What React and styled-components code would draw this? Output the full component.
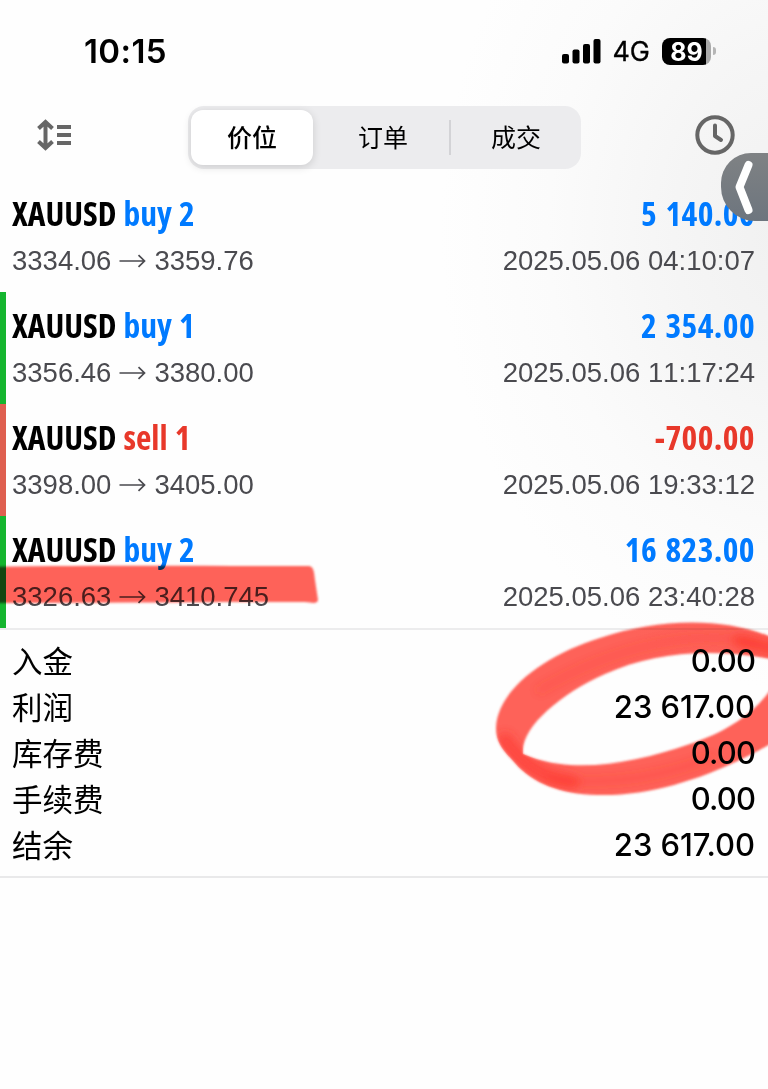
import React from "react";
import styled, { createGlobalStyle } from "styled-components";

const GlobalStyle = createGlobalStyle`
  * {
    box-sizing: border-box;
  }
  body {
    margin: 0;
    background: #fefefe;
  }
`;

const blue = "#007aff";
const red = "#e8382a";

const Screen = styled.div`
  position: relative;
  width: 768px;
  height: 1089px;
  overflow: hidden;
  color: #000;
  font-family: "Liberation Sans", "Noto Sans CJK SC", sans-serif;
  background: radial-gradient(ellipse 360px 460px at 800px 230px, #f0f0f0 0%, #f5f5f5 35%, #fbfbfb 70%, #fefefe 100%);
`;

const StatusBar = styled.header`
  display: flex;
  align-items: center;
  justify-content: space-between;
  height: 102px;
  padding: 0 52px 0 84px;
  font-family: Inter, sans-serif;
`;

const Time = styled.span`
  font-size: 33px;
  font-weight: 600;
  letter-spacing: 0.4px;
  line-height: 40px;
`;

const StatusIcons = styled.div`
  display: flex;
  align-items: center;
`;

const Network = styled.span`
  margin: 0 12px 0 11px;
  padding-top: 2px;
  font-size: 27px;
  line-height: 32px;
  -webkit-text-stroke: 0.3px #000;
`;

const Battery = styled.div`
  width: 49px;
  height: 27px;
  border-radius: 8px;
  background: linear-gradient(to right, #000 44px, #a9a9a9 44px);
  color: #fff;
  font-size: 25px;
  font-weight: 700;
  line-height: 28px;
  text-align: center;
`;

const BatteryTip = styled.div`
  width: 3px;
  height: 8px;
  margin-left: 2px;
  border-radius: 0 3px 3px 0;
  background: #b5b5b5;
`;

const Toolbar = styled.nav`
  display: flex;
  align-items: center;
  justify-content: space-between;
  height: 78px;
  padding: 0 33px 12px 36px;
`;

const Tabs = styled.div`
  display: flex;
  align-items: center;
  width: 393px;
  height: 63px;
  margin-left: 116px;
  margin-top: 5px;
  margin-right: auto;
  padding: 4px 4px 4px 3px;
  border-radius: 16px;
  background: #ececee;
`;

const Tab = styled.div`
  flex: 0 0 ${(props) => props.$width};
  height: 55px;
  padding-left: ${(props) => (props.$active ? "0" : "4px")};
  border-radius: 12px;
  background: ${(props) => (props.$active ? "#fff" : "transparent")};
  box-shadow: ${(props) => (props.$active ? "0 2px 8px rgba(0, 0, 0, 0.14)" : "none")};
  font-family: "Noto Sans CJK SC", sans-serif;
  font-size: 25px;
  font-weight: ${(props) => (props.$active ? 500 : 400)};
  line-height: 53px;
  text-align: center;
`;

const Divider = styled.div`
  width: 2px;
  height: 35px;
  background: #d3d3d6;
`;

const Deal = styled.section`
  display: flex;
  flex-direction: column;
  height: 112px;
  padding: 11px 13px 0 6px;
  border-left: 6px solid ${(props) => props.$mark || "transparent"};
`;

const Line = styled.div`
  display: flex;
  justify-content: space-between;
  align-items: center;
  height: 44px;
`;

const Title = styled.div`
  font-family: "Open Sans", sans-serif;
  font-size: 33.5px;
  font-weight: 700;
  font-stretch: 75%;
  white-space: nowrap;
  word-spacing: 1px;
`;

const Side = styled.span`
  color: ${(props) => props.$color};
`;

const Amount = styled(Title)`
  color: ${(props) => props.$color};
  letter-spacing: 0.4px;
  word-spacing: 2px;
`;

const Detail = styled.div`
  display: flex;
  align-items: center;
  justify-content: space-between;
  height: 51px;
  color: #4a4a4f;
  font-size: 27.5px;
  font-kerning: none;
`;

const Prices = styled.span`
  display: flex;
  align-items: center;
  gap: 8px;
`;

const Summary = styled.section`
  height: 250px;
  padding: 8px 13px 0 12px;
  border-top: 2px solid #ececed;
  border-bottom: 2px solid #e9e9ea;
`;

const SummaryRow = styled.div`
  display: flex;
  align-items: center;
  justify-content: space-between;
  height: 46px;
`;

const Label = styled.span`
  padding-bottom: 1px;
  font-family: "Noto Sans CJK SC", sans-serif;
  font-size: 30.5px;
  line-height: 43px;
`;

const Value = styled.span`
  padding-bottom: 1px;
  font-family: Inter, sans-serif;
  font-size: 31px;
  font-weight: 500;
  letter-spacing: ${(props) => (props.$tight ? "-0.9px" : "-0.05px")};
`;

const Handle = styled.div`
  position: absolute;
  top: 153px;
  right: 0;
  width: 47px;
  height: 68px;
  border-radius: 30px 0 0 34px;
  background: linear-gradient(#7f8284, #6d757e);
`;

const Ink = styled.svg`
  position: absolute;
  top: 0;
  left: 0;
  pointer-events: none;
  mix-blend-mode: multiply;
`;

const deals = [
  { side: "buy", lots: 2, open: "3334.06", close: "3359.76", profit: "5 140.00", time: "2025.05.06 04:10:07" },
  { side: "buy", lots: 1, open: "3356.46", close: "3380.00", profit: "2 354.00", time: "2025.05.06 11:17:24", mark: "#15b52f" },
  { side: "sell", lots: 1, open: "3398.00", close: "3405.00", profit: "-700.00", time: "2025.05.06 19:33:12", mark: "#df5f50" },
  { side: "buy", lots: 2, open: "3326.63", close: "3410.745", profit: "16 823.00", time: "2025.05.06 23:40:28", mark: "#15b52f" },
];

const totals = [
  ["入金", "0.00"],
  ["利润", "23 617.00"],
  ["库存费", "0.00"],
  ["手续费", "0.00"],
  ["结余", "23 617.00"],
];

const ring =
  "M496 728C497 690 545 655 600 638C660 618 728 616 780 641V738C728 770 660 797 597 795C560 794 532 783 515 763C505 752 496 744 496 728ZM523 754C520 728 560 694 605 674C655 651 718 647 780 661V672C765 708 730 731 690 744C632 764 570 775 523 754Z";

const Arrow = () => (
  <svg width="27" height="14" viewBox="0 0 27 14" fill="none" stroke="#4a4a4f" strokeWidth="1.7">
    <path d="M0.5 7H25.5M19.5 1.2L25.5 7L19.5 12.8" />
  </svg>
);

const Signal = () => (
  <svg width="39" height="25" viewBox="0 0 39 25">
    <rect x="0" y="15" width="7" height="9.5" rx="2" />
    <rect x="10.5" y="10.5" width="7" height="14" rx="2" />
    <rect x="21" y="5" width="7" height="19.5" rx="2" />
    <rect x="31.5" y="0" width="7" height="24.5" rx="2" />
  </svg>
);

const SortIcon = () => (
  <svg width="36" height="32" viewBox="0 0 36 32" fill="none" stroke="#666" strokeWidth="4">
    <path d="M9.5 4V28M2.5 9.5L9.5 3L16.5 9.5M2.5 22.5L9.5 29L16.5 22.5M21 8H35M21 16H35M21 24H35" />
  </svg>
);

const ClockIcon = () => (
  <svg width="40" height="40" viewBox="0 0 40 40" fill="none" stroke="#666" strokeWidth="4">
    <circle cx="20" cy="20" r="17.7" />
    <path d="M20 10.5V21L26 25" strokeLinecap="round" strokeLinejoin="round" />
  </svg>
);

const App = () => {
  return (
    <>
      <GlobalStyle />
      <Screen>
        <StatusBar>
          <Time>10:15</Time>
          <StatusIcons>
            <Signal />
            <Network>4G</Network>
            <Battery>89</Battery>
            <BatteryTip />
          </StatusIcons>
        </StatusBar>
        <Toolbar>
          <SortIcon />
          <Tabs>
            <Tab $active $width="122px">价位</Tab>
            <Tab $width="136px">订单</Tab>
            <Divider />
            <Tab $width="126px">成交</Tab>
          </Tabs>
          <ClockIcon />
        </Toolbar>
        {deals.map((deal) => {
          const isBuy = deal.side === "buy";
          return (
            <Deal key={deal.time} $mark={deal.mark}>
              <Line>
                <Title>
                  XAUUSD <Side $color={isBuy ? blue : red}>{deal.side} {deal.lots}</Side>
                </Title>
                <Amount $color={isBuy ? blue : red}>{deal.profit}</Amount>
              </Line>
              <Detail>
                <Prices>
                  {deal.open}
                  <Arrow />
                  {deal.close}
                </Prices>
                <span>{deal.time}</span>
              </Detail>
            </Deal>
          );
        })}
        <Summary>
          {totals.map(([label, value]) => (
            <SummaryRow key={label}>
              <Label>{label}</Label>
              <Value $tight={value.length < 5}>{value}</Value>
            </SummaryRow>
          ))}
        </Summary>
        <Handle>
          <svg width="47" height="68" viewBox="0 0 47 68" fill="none" stroke="#fff" strokeWidth="8" strokeLinecap="round" strokeLinejoin="round">
            <path d="M27.5 12L18.5 34L27.5 57" />
          </svg>
        </Handle>
        <Ink width="768" height="1089" viewBox="0 0 768 1089">
          <defs>
            <filter id="soft" x="-5%" y="-5%" width="110%" height="110%">
              <feGaussianBlur stdDeviation="0.8" />
            </filter>
            <filter id="smudge" filterUnits="userSpaceOnUse" x="440" y="580" width="400" height="260">
              <feGaussianBlur stdDeviation="5" />
            </filter>
            <clipPath id="ring">
              <path clipRule="evenodd" d={ring} />
            </clipPath>
          </defs>
          <g fill="#ff3b30" fillOpacity="0.8" filter="url(#soft)">
            <path d="M-10 567C90 565 210 566 309 566C314 567 314 572 315 580L318 600C317 604 313 603 305 602C200 602 100 603 -10 603Z" />
            <path fillRule="evenodd" d={ring} />
          </g>
          <g clipPath="url(#ring)">
            <g fill="none" stroke="#ff3126" strokeLinecap="round" filter="url(#smudge)">
              <path d="M505 740C520 762 540 777 572 782" strokeWidth="15" strokeOpacity="0.55" />
              <path d="M550 780C620 786 670 774 710 758" strokeWidth="9" strokeOpacity="0.25" />
              <path d="M540 690C620 643 700 630 755 642" strokeWidth="9" strokeOpacity="0.22" />
              <path d="M740 641L780 650" strokeWidth="14" strokeOpacity="0.6" />
            </g>
          </g>
        </Ink>
      </Screen>
    </>
  );
};

export default App;
